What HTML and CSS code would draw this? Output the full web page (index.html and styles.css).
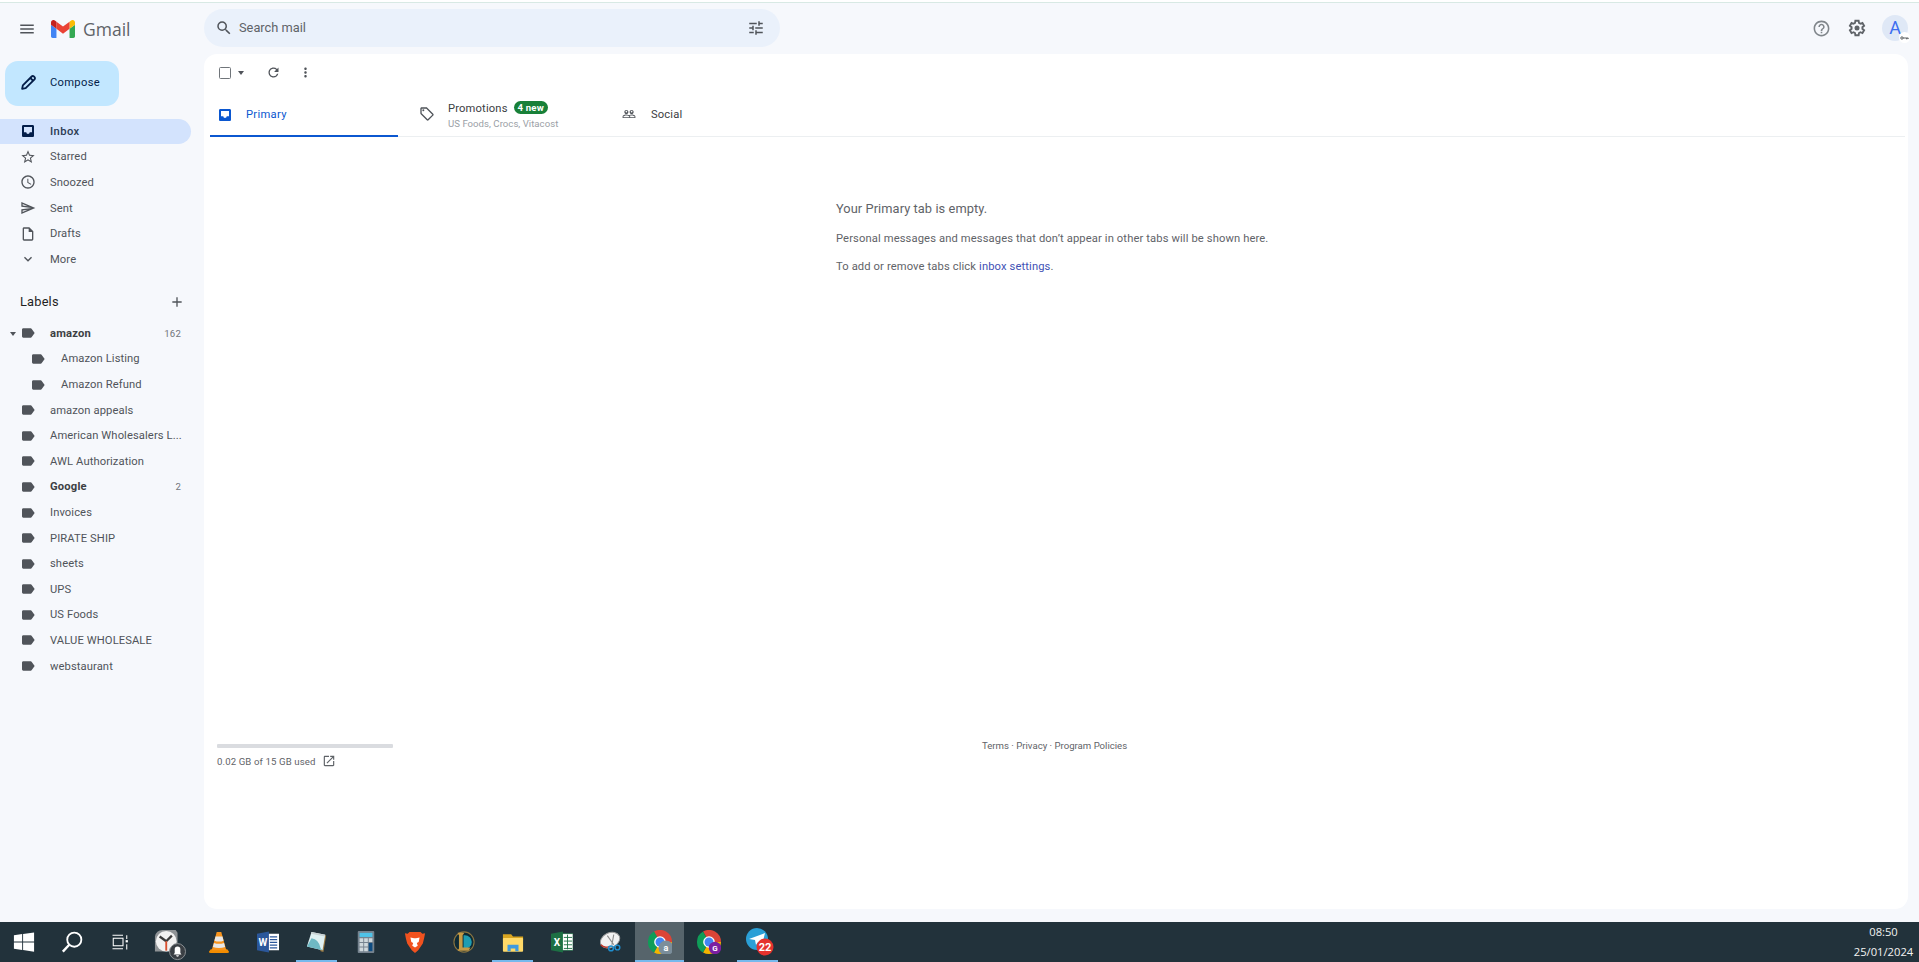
FILE: index.html
```html
<!DOCTYPE html>
<html lang="en">

<head>
  <meta charset="UTF-8">
  <meta name="viewport" content="width=device-width, initial-scale=1.0">
  <title>Inbox - Gmail</title>
  <link rel="stylesheet" href="styles.css">
</head>

<body>

  <!-- icon set, used with <use> below -->
  <svg class="icon-defs" aria-hidden="true">
    <symbol id="i-label" viewBox="0 0 24 24"><path d="M17.63 5.84C17.27 5.33 16.67 5 16 5L5 5.01C3.9 5.01 3 5.9 3 7v10c0 1.1.9 1.99 2 1.99L16 19c.67 0 1.27-.33 1.63-.84L22 12l-4.37-6.16z"/></symbol>
    <symbol id="i-inbox" viewBox="0 0 24 24"><path fill-rule="evenodd" d="M19 3H5c-1.1 0-2 .9-2 2v14c0 1.1.9 2 2 2h14c1.1 0 2-.9 2-2V5c0-1.1-.9-2-2-2zM18 6H6v8h3.5c0 1.4 1.1 2.5 2.5 2.5s2.5-1.1 2.5-2.5H18z"/></symbol>
  </svg>

  <div class="top-line"></div>

  <div class="app">
    <aside class="sidebar">
      <div class="brand">
        <svg class="ico menu-ico" viewBox="0 0 24 24"><path d="M3 18h18v-2H3v2zm0-5h18v-2H3v2zm0-7v2h18V6H3z"/></svg>
        <svg class="gmail-logo" viewBox="52 42 88 66">
          <path fill="#4285f4" d="M58 108h14V74L52 59v43c0 3.32 2.69 6 6 6"/>
          <path fill="#34a853" d="M120 108h14c3.32 0 6-2.69 6-6V59l-20 15"/>
          <path fill="#fbbc04" d="M120 48v26l20-15v-8c0-7.42-8.47-11.65-14.4-7.2"/>
          <path fill="#ea4335" d="M72 74V48l24 18 24-18v26L96 92"/>
          <path fill="#c5221f" d="M52 51v8l20 15V48l-5.6-4.2c-5.94-4.45-14.4-.22-14.4 7.2"/>
        </svg>
        <span class="brand-name">Gmail</span>
      </div>

      <button class="compose">
        <svg class="compose-ico" viewBox="0 0 24 24"><path d="M3 21l1-5L16.5 3.5a2.1 2.1 0 0 1 3 0l1 1a2.1 2.1 0 0 1 0 3L8 20z" fill="none" stroke="#041e49" stroke-width="2.6" stroke-linejoin="round"/><path d="M14.5 5.5l4 4" stroke="#041e49" stroke-width="2.6"/></svg>
        Compose
      </button>

      <nav class="nav">
        <a class="nav-row active"><svg class="ico"><use href="#i-inbox"/></svg><span>Inbox</span></a>
        <a class="nav-row"><svg class="ico" viewBox="0 0 24 24"><path d="M22 9.24l-7.19-.62L12 2 9.19 8.63 2 9.24l5.46 4.73L5.82 21 12 17.27 18.18 21l-1.63-7.03L22 9.24zM12 15.4l-3.76 2.27 1-4.28-3.32-2.88 4.38-.38L12 6.1l1.71 4.04 4.38.38-3.32 2.88 1 4.28L12 15.4z"/></svg><span>Starred</span></a>
        <a class="nav-row"><svg class="ico" viewBox="0 0 24 24"><path d="M11.99 2C6.47 2 2 6.48 2 12s4.47 10 9.99 10C17.52 22 22 17.52 22 12S17.52 2 11.99 2zM12 20c-4.42 0-8-3.58-8-8s3.58-8 8-8 8 3.58 8 8-3.58 8-8 8zm.5-13H11v6l5.25 3.15.75-1.23-4.5-2.67z"/></svg><span>Snoozed</span></a>
        <a class="nav-row"><svg class="ico" viewBox="0 0 24 24"><path d="M4.01 6.03l7.51 3.22-7.52-1 .01-2.22m7.5 8.72L4 17.97v-2.22l7.51-1M2.01 3L2 10l15 2-15 2 .01 7L23 12 2.01 3z"/></svg><span>Sent</span></a>
        <a class="nav-row"><svg class="ico" viewBox="0 0 24 24"><path d="M14 2H6c-1.1 0-1.99.9-1.99 2L4 20c0 1.1.89 2 1.99 2H18c1.1 0 2-.9 2-2V8l-6-6zM6 20V4h7v5h5v11H6z"/></svg><span>Drafts</span></a>
        <a class="nav-row"><svg class="ico" viewBox="0 0 24 24"><path d="M16.59 8.59L12 13.17 7.41 8.59 6 10l6 6 6-6z"/></svg><span>More</span></a>
      </nav>

      <div class="labels-head">
        <span>Labels</span>
        <svg class="ico" viewBox="0 0 24 24"><path d="M19 13h-6v6h-2v-6H5v-2h6V5h2v6h6v2z"/></svg>
      </div>

      <nav class="nav">
        <a class="nav-row bold"><i class="caret"></i><svg class="ico"><use href="#i-label"/></svg><span>amazon</span><em>162</em></a>
        <a class="nav-row sub"><svg class="ico"><use href="#i-label"/></svg><span>Amazon Listing</span></a>
        <a class="nav-row sub"><svg class="ico"><use href="#i-label"/></svg><span>Amazon Refund</span></a>
        <a class="nav-row"><svg class="ico"><use href="#i-label"/></svg><span>amazon appeals</span></a>
        <a class="nav-row"><svg class="ico"><use href="#i-label"/></svg><span>American Wholesalers L...</span></a>
        <a class="nav-row"><svg class="ico"><use href="#i-label"/></svg><span>AWL Authorization</span></a>
        <a class="nav-row bold"><svg class="ico"><use href="#i-label"/></svg><span>Google</span><em>2</em></a>
        <a class="nav-row"><svg class="ico"><use href="#i-label"/></svg><span>Invoices</span></a>
        <a class="nav-row"><svg class="ico"><use href="#i-label"/></svg><span>PIRATE SHIP</span></a>
        <a class="nav-row"><svg class="ico"><use href="#i-label"/></svg><span>sheets</span></a>
        <a class="nav-row"><svg class="ico"><use href="#i-label"/></svg><span>UPS</span></a>
        <a class="nav-row"><svg class="ico"><use href="#i-label"/></svg><span>US Foods</span></a>
        <a class="nav-row"><svg class="ico"><use href="#i-label"/></svg><span>VALUE WHOLESALE</span></a>
        <a class="nav-row"><svg class="ico"><use href="#i-label"/></svg><span>webstaurant</span></a>
      </nav>
    </aside>

    <div class="content">
      <header class="topbar">
        <div class="search">
          <svg class="ico search-ico" viewBox="0 0 24 24"><path d="M15.5 14h-.79l-.28-.27A6.471 6.471 0 0 0 16 9.5 6.5 6.5 0 1 0 9.5 16c1.61 0 3.09-.59 4.23-1.57l.27.28v.79l5 4.99L20.49 19l-4.99-5zm-6 0C7.01 14 5 11.99 5 9.5S7.01 5 9.5 5 14 7.01 14 9.5 11.99 14 9.5 14z"/></svg>
          <span class="search-text">Search mail</span>
          <svg class="ico tune-ico" viewBox="0 0 24 24"><path d="M3 17v2h6v-2H3zM3 5v2h10V5H3zm10 16v-2h8v-2h-8v-2h-2v6h2zM7 9v2H3v2h4v2h2V9H7zm14 4v-2H11v2h10zm-6-4h2V7h4V5h-4V3h-2v6z"/></svg>
        </div>
        <div class="top-actions">
          <svg class="help-ico" viewBox="0 0 24 24"><path d="M11 18h2v-2h-2v2zm1-16C6.48 2 2 6.48 2 12s4.48 10 10 10 10-4.48 10-10S17.52 2 12 2zm0 18c-4.41 0-8-3.59-8-8s3.59-8 8-8 8 3.59 8 8-3.59 8-8 8zm0-14c-2.21 0-4 1.79-4 4h2c0-1.1.9-2 2-2s2 .9 2 2c0 2-3 1.75-3 5h2c0-2.25 3-2.5 3-5 0-2.21-1.79-4-4-4z"/></svg>
          <svg class="gear-ico" viewBox="0 0 24 24"><path fill="none" stroke="#5f6368" stroke-width="2.2" d="M18.43 12.98c.04-.32.07-.64.07-.98s-.03-.66-.07-.98l2.11-1.65-2-3.46-2.49 1c-.52-.4-1.08-.73-1.69-.98L14 3.3h-4l-.36 2.63c-.61.25-1.17.59-1.69.98l-2.49-1-2 3.46 2.11 1.65c-.04.32-.07.65-.07.98s.03.66.07.98l-2.11 1.65 2 3.46 2.49-1c.52.4 1.08.73 1.69.98L10 20.7h4l.36-2.63c.61-.25 1.17-.59 1.69-.98l2.49 1 2-3.46z"/><circle cx="12" cy="12" r="3" fill="#5f6368"/></svg>
          <div class="avatar">
            <span>A</span>
            <i class="avatar-badge"><svg viewBox="0 0 12 8"><circle cx="2.6" cy="4" r="1.6" fill="none" stroke="#3c4043" stroke-width="1.1"/><path d="M4.2 4H11M9 4v1.8M10.8 4v1.4" fill="none" stroke="#3c4043" stroke-width="1.1"/></svg></i>
          </div>
        </div>
      </header>

      <main class="panel">
        <div class="toolbar">
          <span class="checkbox"></span>
          <i class="caret dark"></i>
          <svg class="ico refresh" viewBox="0 0 24 24"><path d="M17.65 6.35A7.958 7.958 0 0 0 12 4c-4.42 0-7.99 3.58-7.99 8s3.57 8 7.99 8c3.73 0 6.84-2.55 7.73-6h-2.08A5.99 5.99 0 0 1 12 18c-3.31 0-6-2.69-6-6s2.69-6 6-6c1.66 0 3.14.69 4.22 1.78L13 11h7V4l-2.35 2.35z"/></svg>
          <svg class="ico dots" viewBox="0 0 24 24"><path d="M12 8c1.1 0 2-.9 2-2s-.9-2-2-2-2 .9-2 2 .9 2 2 2zm0 2c-1.1 0-2 .9-2 2s.9 2 2 2 2-.9 2-2-.9-2-2-2zm0 6c-1.1 0-2 .9-2 2s.9 2 2 2 2-.9 2-2-.9-2-2-2z"/></svg>
        </div>

        <div class="tabs">
          <div class="tab tab-primary">
            <svg class="ico"><use href="#i-inbox"/></svg>
            <span>Primary</span>
          </div>
          <div class="tab tab-promo">
            <svg class="ico" viewBox="0 0 24 24"><path d="M21.41 11.58l-9-9C12.05 2.22 11.55 2 11 2H4c-1.1 0-2 .9-2 2v7c0 .55.22 1.05.59 1.42l9 9c.36.36.86.58 1.41.58s1.05-.22 1.41-.59l7-7c.37-.36.59-.86.59-1.41s-.23-1.06-.59-1.42zM13 20.01L4 11V4h7v-.01l9 9-7 7.02z"/><circle cx="6.5" cy="6.5" r="1.5"/></svg>
            <div class="tab-text">
              <div class="tab-title">Promotions <b class="chip">4 new</b></div>
              <div class="tab-sub">US Foods, Crocs, Vitacost</div>
            </div>
          </div>
          <div class="tab tab-social">
            <svg class="ico social-ico" viewBox="0 0 24 24"><path d="M16.5 13c-1.2 0-3.07.34-4.5 1-1.43-.67-3.3-1-4.5-1C5.33 13 1 14.08 1 16.25V19h22v-2.75c0-2.17-4.33-3.25-6.5-3.25zm-4 4.5h-10v-1.25c0-.54 2.56-1.75 5-1.75s5 1.21 5 1.75v1.25zm9 0H14v-1.25c0-.46-.2-.86-.52-1.22.88-.3 1.96-.53 3.02-.53 2.44 0 5 1.21 5 1.75v1.25zM7.5 12c1.93 0 3.5-1.57 3.5-3.5S9.43 5 7.5 5 4 6.57 4 8.5 5.57 12 7.5 12zm0-5.5c.83 0 1.5.67 1.5 1.5s-.67 1.5-1.5 1.5S6 8.83 6 8s.67-1.5 1.5-1.5zm9 5.5c1.93 0 3.5-1.57 3.5-3.5S18.43 5 16.5 5 13 6.57 13 8.5s1.57 3.5 3.5 3.5zm0-5.5c.83 0 1.5.67 1.5 1.5s-.67 1.5-1.5 1.5S15 8.83 15 8s.67-1.5 1.5-1.5z"/></svg>
            <span>Social</span>
          </div>
        </div>

        <section class="empty">
          <p class="empty-title">Your Primary tab is empty.</p>
          <p>Personal messages and messages that don’t appear in other tabs will be shown here.</p>
          <p>To add or remove tabs click <a>inbox settings</a>.</p>
        </section>

        <footer class="panel-foot">
          <div class="storage">
            <div class="storage-bar"></div>
            <div class="storage-text">
              0.02 GB of 15 GB used
              <svg viewBox="0 0 24 24"><path d="M19 19H5V5h7V3H5c-1.11 0-2 .9-2 2v14c0 1.1.89 2 2 2h14c1.1 0 2-.9 2-2v-7h-2v7zM14 3v2h3.59l-9.83 9.83 1.41 1.41L19 6.41V10h2V3h-7z"/></svg>
            </div>
          </div>
          <div class="policies">Terms · Privacy · Program Policies</div>
        </footer>
      </main>
    </div>
  </div>

  <div class="taskbar">
    <div class="task sys">
      <svg class="tb-ico" viewBox="0 0 24 24"><path fill="#fff" d="M1 4.6l9-1.3v8.2H1zM11 3.2L23 1.5v10H11zM1 12.5h9v8.2l-9-1.3zM11 12.5h12v10l-12-1.7z"/></svg>
    </div>
    <div class="task sys">
      <svg class="tb-ico" viewBox="0 0 24 24"><circle cx="14.5" cy="9.5" r="7.7" fill="none" stroke="#fff" stroke-width="2"/><path d="M9 15L2 22.5" stroke="#fff" stroke-width="2.6"/></svg>
    </div>
    <div class="task sys">
      <svg class="tb-ico view-ico" viewBox="0 0 24 24" fill="none" stroke="#fff" stroke-width="1.4"><path d="M2 3h14M2 21h14"/><rect x="3" y="7" width="13" height="10"/><path d="M21 3v5M21 15v7"/><rect x="19.5" y="9.5" width="3" height="3" fill="#fff" stroke="none"/></svg>
    </div>

    <div class="task">
      <svg class="tb-ico wide" viewBox="0 0 34 34">
        <path fill="#8f9396" d="M1 8a8 8 0 0 1 8-7h14l2 3v20H1z"/>
        <circle cx="13" cy="13" r="11" fill="#f1f1f1"/>
        <path d="M13 13L6 8M13 13l6-6" stroke="#3a3a3a" stroke-width="2.4"/>
        <path d="M13 13v10" stroke="#d9502e" stroke-width="2"/>
        <circle cx="25" cy="24" r="8.5" fill="#3a3f44" stroke="#8f9396" stroke-width="1"/>
        <path fill="#fff" d="M25 18.5a3 3 0 0 1 3 3v4l1.2 1.5h-8.4l1.2-1.5v-4a3 3 0 0 1 3-3zM23.5 28h3a1.5 1.5 0 0 1-3 0z"/>
      </svg>
    </div>
    <div class="task">
      <svg class="tb-ico" viewBox="0 0 24 24">
        <path fill="#f28c00" d="M3 20h18l2 2.5q0 1.5-2 1.5H3q-2 0-2-1.500z"/>
        <path fill="#f7941d" d="M9.5 1h5l5.5 20H4z"/>
        <path fill="#e8e8e8" d="M8.2 6h7.6l1.2 4.5q-5 2-10 0zM6.5 13q5.5 2 11 0l1.2 4.5q-6.7 2-13.4 0z"/>
      </svg>
    </div>
    <div class="task">
      <svg class="tb-ico" viewBox="0 0 24 24">
        <rect x="9" y="3" width="15" height="18" fill="#fff"/>
        <path stroke="#2b579a" stroke-width="1.3" d="M14 6.5h8M14 9.5h8M14 12.5h8M14 15.5h8M14 18.5h8"/>
        <path fill="#2b579a" d="M0 3L13 .5v23L0 21z"/>
        <text class="tb-letter" x="6.5" y="16.5" text-anchor="middle" font-size="11">W</text>
      </svg>
    </div>
    <div class="task open">
      <svg class="tb-ico" viewBox="0 0 24 24">
        <path fill="#9b7b45" d="M8 2l14 3-3 18-3-1z"/>
        <path fill="#dff1f3" d="M6 1l15 3-3 17L1 17z"/>
        <path fill="#6fb9c4" d="M1 17L6 8q8 1 10 11l2 2z"/>
        <path fill="#c8d2d4" d="M6 1l15 3-.4 2L5.5 3z"/>
      </svg>
    </div>
    <div class="task">
      <svg class="tb-ico" viewBox="0 0 24 24">
        <rect x="3" y="0" width="18" height="24" rx="1" fill="#76838f"/>
        <rect x="5" y="2" width="14" height="4.5" fill="#4fc3e8"/>
        <path fill="#cfd8dc" d="M5 8h4v4H5zM10 8h4v4h-4zM15 8h4v4h-4zM5 13h4v4H5zM10 13h4v4h-4zM5 18h4v4H5zM10 18h4v4h-4z"/>
        <rect x="15" y="13" width="4" height="9" fill="#0f4c81"/>
      </svg>
    </div>
    <div class="task">
      <svg class="tb-ico" viewBox="0 0 24 24">
        <path fill="#f1521f" d="M6 1h12l2 2 3-.5-1 5-1.5 6-5 7.5L12 24l-3.500-3-5-7.500L2 8 1 2.500 4 3z"/>
        <path fill="#fff" d="M7 7l4 1h2l4-1-1 5-2 1 1 3-3 2-3-2 1-3-2-1z"/>
      </svg>
    </div>
    <div class="task">
      <svg class="tb-ico" viewBox="0 0 24 24">
        <circle cx="12" cy="12" r="11" fill="#0d2a35" stroke="#8a7440" stroke-width="1.2"/>
        <path fill="#1f9db2" d="M13 4.5a7.5 7.5 0 0 1 0 15h-1.5v-15z"/>
        <path fill="#c69b45" d="M5 2h7.5L10.5 4.5V18h8.5l-2 3.500H5l1.500-2.500V4.500z"/>
      </svg>
    </div>
    <div class="task open">
      <svg class="tb-ico" viewBox="0 0 24 24">
        <path fill="#d9a520" d="M1 3.5h9l2 2.5h11v4H1z"/>
        <rect x="1" y="7.5" width="22" height="15" rx="1" fill="#ffd968"/>
        <path fill="#3f9ae0" d="M6 15h12v7h-3.5v-3h-5v3H6z"/>
      </svg>
    </div>
    <div class="task">
      <svg class="tb-ico" viewBox="0 0 24 24">
        <rect x="9" y="3" width="15" height="18" fill="#fff" stroke="#1d7044" stroke-width=".7"/>
        <path stroke="#1d7044" stroke-width="1" d="M14 7h9M14 11h9M14 15h9M14 19h9M18 4v16"/>
        <path fill="#1d7044" d="M0 3L13 .5v23L0 21z"/>
        <text class="tb-letter" x="6.5" y="16.5" text-anchor="middle" font-size="11">X</text>
      </svg>
    </div>
    <div class="task">
      <svg class="tb-ico" viewBox="0 0 24 24">
        <ellipse cx="11" cy="10" rx="11" ry="8" fill="#f2f2f2" transform="rotate(-25 11 10)" stroke="#9b9b9b"/>
        <path d="M1 15q3 4 9 2" fill="none" stroke="#c0392b" stroke-width="1.5"/>
        <path d="M8 5l7 10M15 4l-2 11" stroke="#8b8b8b" stroke-width="1.2"/>
        <circle cx="12" cy="19" r="2.6" fill="none" stroke="#1f8fd0" stroke-width="1.6"/>
        <circle cx="19" cy="18" r="2.6" fill="none" stroke="#1f8fd0" stroke-width="1.6"/>
      </svg>
    </div>
    <div class="task open current">
      <svg class="tb-ico chrome" viewBox="0 0 24 24">
        <path fill="#db4437" d="M12 12L6 1.6A12 12 0 0 1 24 12z"/>
        <path fill="#f4b400" d="M12 12h12A12 12 0 0 1 6 22.39z"/>
        <path fill="#0f9d58" d="M12 12L6 22.39A12 12 0 0 1 6 1.6z"/>
        <circle cx="12" cy="12" r="5.8" fill="#fff"/>
        <circle cx="12" cy="12" r="4.5" fill="#4285f4"/>
        <circle cx="18" cy="18" r="7.5" fill="#7b8e9b"/>
        <text class="tb-letter" x="18" y="21" text-anchor="middle" font-size="9">a</text>
      </svg>
    </div>
    <div class="task">
      <svg class="tb-ico chrome" viewBox="0 0 24 24">
        <path fill="#db4437" d="M12 12L6 1.6A12 12 0 0 1 24 12z"/>
        <path fill="#f4b400" d="M12 12h12A12 12 0 0 1 6 22.39z"/>
        <path fill="#0f9d58" d="M12 12L6 22.39A12 12 0 0 1 6 1.6z"/>
        <circle cx="12" cy="12" r="5.8" fill="#fff"/>
        <circle cx="12" cy="12" r="4.5" fill="#4285f4"/>
        <circle cx="18" cy="18" r="6.2" fill="#7b1fa2"/>
        <text class="tb-letter" x="18" y="20.8" text-anchor="middle" font-size="8">G</text>
      </svg>
    </div>
    <div class="task open">
      <svg class="tb-ico tg" viewBox="0 0 28 28">
        <circle cx="11" cy="11" r="11" fill="#2a9fd6"/>
        <path fill="#fff" d="M3 11L19 5l-3 12-4-3-2 3-1-5z"/>
        <circle cx="19" cy="19" r="8.5" fill="#e5322d"/>
        <text class="tb-letter" x="19" y="23" text-anchor="middle" font-size="11">22</text>
      </svg>
    </div>

    <div class="clock">
      <div>08:50</div>
      <div>25/01/2024</div>
    </div>
  </div>

</body>

</html>
```

FILE: styles.css
```css
* {
  box-sizing: border-box;
}

html, body {
  margin: 0;
  height: 100%;
}

body {
  display: flex;
  flex-direction: column;
  height: 962px;
  overflow: hidden;
  font-family: Roboto, Arial, sans-serif;
  font-size: 11.2px;
  color: #50545a;
  background-color: #f6f8fc;
}

a {
  text-decoration: none;
}

em, i {
  font-style: normal;
}

.icon-defs {
  display: none;
}

.ico {
  width: 16px;
  height: 16px;
  flex: none;
  fill: #50545a;
}

.top-line {
  height: 3px;
  flex: none;
  background-color: #fff;
  border-bottom: 1px solid #d8e9e4;
}

.app {
  flex: 1;
  display: flex;
  min-height: 0;
}

/* sidebar */
.sidebar {
  width: 204px;
  flex: none;
}

.brand {
  height: 52px;
  display: flex;
  align-items: center;
  padding-left: 18px;
}

.menu-ico {
  width: 18px;
  height: 18px;
}

.gmail-logo {
  width: 24px;
  height: 18px;
  margin-left: 15px;
}

.brand-name {
  margin-left: 8px;
  font-size: 17.5px;
  color: #5f6368;
  font-family: "Open Sans", Arial, sans-serif;
}

.compose {
  display: flex;
  align-items: center;
  width: 114px;
  height: 45px;
  margin: 6px 0 12.5px 5px;
  padding: 0 0 2px 15px;
  border: none;
  border-radius: 13px;
  background-color: #c2e7ff;
  color: #041e49;
  font-family: Roboto, Arial, sans-serif;
  font-size: 11.2px;
  letter-spacing: .3px;
}

.compose-ico {
  width: 17px;
  height: 17px;
  margin-right: 13px;
}

.nav-row {
  display: flex;
  align-items: center;
  width: 191px;
  height: 25.6px;
  padding: 0 10px 0 20px;
  border-radius: 0 13px 13px 0;
  color: #50545a;
  letter-spacing: .1px;
  position: relative;
}

.nav-row span {
  margin-left: 14px;
  flex: 1;
  white-space: nowrap;
}

.nav-row em {
  font-size: 9.6px;
  font-weight: 400;
  color: #70757a;
}

.nav-row.active {
  background-color: #d3e3fd;
  color: #2a3a52;
  font-weight: 500;
  letter-spacing: .4px;
}

.nav-row.active .ico {
  fill: #041e49;
}

.nav-row.bold {
  font-weight: 700;
  color: #3c4043;
  letter-spacing: .2px;
}

.nav-row.sub {
  padding-left: 30px;
}

.nav-row.sub span {
  margin-left: 15px;
}

.caret {
  position: absolute;
  left: 10px;
  top: 11px;
  border: 3.5px solid transparent;
  border-top: 4px solid #50545a;
  border-bottom: none;
}

.labels-head {
  display: flex;
  justify-content: space-between;
  align-items: center;
  height: 26px;
  margin-top: 16.5px;
  margin-bottom: 6px;
  padding: 0 19px 0 20px;
  font-size: 12.8px;
  color: #1f1f1f;
  letter-spacing: .2px;
}

/* top bar */
.content {
  flex: 1;
  display: flex;
  flex-direction: column;
  min-width: 0;
}

.topbar {
  height: 51px;
  flex: none;
  display: flex;
  align-items: center;
  justify-content: space-between;
  padding-bottom: 1px;
}

.search {
  width: 576px;
  height: 38.4px;
  display: flex;
  align-items: center;
  padding: 0 15px 0 11px;
  border-radius: 20px;
  background-color: #eaf1fb;
}

.search-ico, .tune-ico {
  width: 18px;
  height: 18px;
}

.search-text {
  flex: 1;
  margin-left: 6px;
  font-size: 12.8px;
  color: #5f6368;
}

.top-actions {
  display: flex;
  align-items: center;
  padding-right: 11px;
}

.help-ico {
  width: 19px;
  height: 19px;
  fill: #80868b;
}

.gear-ico {
  width: 20px;
  height: 20px;
  margin-left: 16px;
}

.avatar {
  position: relative;
  width: 26px;
  height: 26px;
  margin-left: 15px;
  border-radius: 50%;
  background-color: #dfe8f6;
  color: #3c6df0;
  font-size: 18px;
  line-height: 26px;
  text-align: center;
}

.avatar-badge {
  position: absolute;
  right: -2px;
  bottom: -2px;
  width: 11px;
  height: 11px;
  padding: 2.5px 1px;
  display: flex;
  border-radius: 50%;
  background-color: #fff;
}

/* main panel */
.panel {
  flex: 1;
  display: flex;
  flex-direction: column;
  margin: 0 11px 13px 0;
  padding-left: 6px;
  background-color: #fff;
  border-radius: 13px;
}

.toolbar {
  height: 37px;
  flex: none;
  display: flex;
  align-items: center;
  padding-left: 9px;
  position: relative;
}

.checkbox {
  width: 12px;
  height: 12px;
  border: 1.5px solid #70757a;
  border-radius: 1.5px;
}

.toolbar .caret {
  position: static;
  margin-left: 7px;
}

.refresh {
  margin-left: 22px;
  width: 15px;
  height: 15px;
}

.dots {
  margin-left: 17px;
  width: 15px;
  height: 15px;
}

.tabs {
  height: 46px;
  flex: none;
  display: flex;
  border-bottom: 1px solid #eceff1;
  margin-right: 3px;
}

.tab {
  display: flex;
  align-items: center;
  flex: none;
  letter-spacing: .16px;
  padding-top: 1px;
  color: #50545a;
}

.tab-primary {
  width: 188px;
  padding: 3px 0 0 7px;
  color: #0b57d0;
  letter-spacing: .3px;
  border-bottom: 2px solid #0b57d0;
  margin-bottom: -1px;
}

.tab-primary .ico {
  fill: #0b57d0;
}

.tab-primary span {
  margin-left: 13px;
}

.tab-promo {
  width: 204px;
  padding-left: 21px;
}

.tab-text {
  margin-left: 13px;
  padding-top: 2px;
}

.tab-title {
  color: #3c4043;
  line-height: 14px;
}

.chip {
  display: inline-block;
  height: 13px;
  margin-left: 3px;
  padding: 0 4px;
  border-radius: 7px;
  background-color: #188038;
  color: #fff;
  font-size: 9.6px;
  line-height: 13px;
  vertical-align: 1px;
}

.tab-sub {
  margin-top: 1px;
  color: #9aa0a6;
  font-size: 9.6px;
  line-height: 13px;
  letter-spacing: .03px;
}

.tab-social {
  padding-left: 20px;
}

.social-ico {
  width: 14px;
  height: 14px;
}

.tab-social span {
  margin-left: 15px;
  color: #3c4043;
}

.empty {
  margin-left: 626px;
  padding-top: 63px;
  height: 607px;
  flex: none;
  color: #5f6368;
  font-size: 11.2px;
  letter-spacing: .12px;
}

.empty p {
  margin: 0 0 14.5px;
  line-height: 13px;
}

.empty .empty-title {
  margin-bottom: 15px;
  padding-top: 1px;
  font-size: 12.8px;
  line-height: 16px;
  letter-spacing: .08px;
}

.empty a {
  color: #3f51b5;
}

.panel-foot {
  display: flex;
  padding-left: 7px;
  font-size: 9.6px;
  color: #5f6368;
}

.storage {
  width: 176px;
  flex: none;
}

.storage-bar {
  height: 4px;
  border-radius: 1px;
  background-color: #dadce0;
}

.storage-text {
  display: flex;
  align-items: center;
  margin-top: 6px;
  letter-spacing: .12px;
}

.storage-text svg {
  width: 14px;
  height: 14px;
  margin-left: 7px;
  fill: #5f6368;
}

.policies {
  margin-left: 589px;
  margin-top: -4px;
}

/* windows taskbar */
.taskbar {
  height: 40px;
  flex: none;
  display: flex;
  align-items: center;
  background-color: #22323b;
}

.task {
  position: relative;
  width: 49px;
  height: 40px;
  flex: none;
  display: flex;
  align-items: center;
  justify-content: center;
}

.task.sys {
  width: 48px;
}

.task.sys:nth-child(3) {
  margin-right: 1px;
}

.task.open::after {
  content: "";
  position: absolute;
  left: 4px;
  right: 4px;
  bottom: 0;
  height: 2px;
  background-color: #76b9ed;
}

.task.current {
  background-color: #56646b;
}

.task.current::after {
  left: 0;
  right: 0;
}

.tb-ico {
  width: 22px;
  height: 24px;
}

.view-ico {
  width: 18px;
}

.tb-ico.wide {
  width: 34px;
  height: 32px;
  margin-top: 6px;
}

.tb-ico.chrome {
  width: 24px;
  height: 24px;
}

.tb-ico.tg {
  width: 28px;
  height: 28px;
  margin-left: 4px;
}

.tb-letter {
  font-family: Roboto, Arial, sans-serif;
  font-weight: 700;
  fill: #fff;
}

.clock {
  margin-left: auto;
  width: 70px;
  padding-right: 1px;
  text-align: center;
  color: #f2f2f2;
  font-family: "Open Sans", Arial, sans-serif;
  font-size: 11.2px;
  line-height: 20px;
}
```
